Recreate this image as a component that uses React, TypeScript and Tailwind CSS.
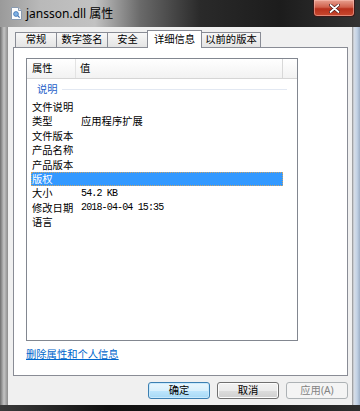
import React from "react";

const cjk = { fontFamily: '"Noto Sans", "Noto Sans CJK SC", sans-serif' };
const mono = { fontFamily: '"Liberation Mono", "Noto Sans CJK SC", monospace' };

function Tab({ label, w, selected, first }: { label: string; w: string; selected?: boolean; first?: boolean }) {
  if (selected) {
    return (
      <div className={`${w} h-[18px] -ml-px relative z-10 flex items-center justify-center border border-b-0 border-[#898c95] bg-white text-[10.3px] text-black`}>
        {label}
      </div>
    );
  }
  return (
    <div
      className={`${w} h-[15px] mb-px ${first ? "" : "-ml-px"} flex items-center justify-center border border-b-0 border-[#898c95] bg-[linear-gradient(to_bottom,#f7f7f7,#e4e4e4)] text-[10.3px] text-black`}
    >
      {label}
    </div>
  );
}

function Row({ label, value, monoValue, selected }: { label: string; value?: string; monoValue?: boolean; selected?: boolean }) {
  return (
    <div
      className={`h-[14.4px] ml-[4px] w-[252px] flex items-center text-[10.3px] leading-none ${
        selected ? "bg-[#3399ff] text-white border border-dotted border-[#c9a46a]" : "text-black border border-transparent"
      }`}
    >
      <div className="w-[49px] pl-0">{label}</div>
      {value && (
        <div style={monoValue ? mono : undefined} className={monoValue ? "text-[10px] tracking-[-0.85px]" : ""}>
          {value}
        </div>
      )}
    </div>
  );
}

function Btn({ label, kind }: { label: string; kind: "default" | "normal" | "disabled" }) {
  const cls =
    kind === "default"
      ? "border-[#3c7fb1] bg-[linear-gradient(to_bottom,#eaf6fd_0%,#d9f0fc_50%,#bee6fd_51%,#a7d9f5_100%)] shadow-[inset_0_0_0_1px_#c9eafd] text-black"
      : kind === "normal"
      ? "border-[#707070] bg-[linear-gradient(to_bottom,#f2f2f2_0%,#ebebeb_50%,#dddddd_51%,#cfcfcf_100%)] shadow-[inset_0_0_0_1px_#fcfcfc] text-black"
      : "border-[#adb2b5] bg-[#f4f4f4] text-[#838383]";
  return (
    <div className={`w-[62px] h-[17px] rounded-[3px] border flex items-center justify-center text-[10.3px] leading-none ${cls}`}>
      {label}
    </div>
  );
}

export default function App() {
  return (
    <div style={cjk} className="w-[360px] h-[411px] flex flex-col overflow-hidden bg-[#1e1e1e]">
      {/* Title bar */}
      <div className="h-[27px] flex items-center bg-[linear-gradient(to_right,#9a9a9a_0px,#b9b9b9_40px,#c2c2c2_95px,#6a6a6a_140px,#2a2a2a_200px,#1c1c1c_280px,#333_360px)]">
        <div className="ml-[10px] w-[12px] h-[14px] flex items-center justify-center">
          <svg width="11" height="13" viewBox="0 0 11 13">
            <path d="M0.5 0.5 H7.5 L10.5 3.5 V12.5 H0.5 Z" fill="#fdfdfd" stroke="#8a9bb0" />
            <path d="M7.5 0.5 V3.5 H10.5" fill="#dfe6ee" stroke="#8a9bb0" />
            <circle cx="5" cy="7" r="2.4" fill="#7fb2e5" stroke="#3a6fb0" strokeWidth="0.8" />
            <path d="M6.7 8.7 L8.6 10.6" stroke="#3a6fb0" strokeWidth="1.2" />
          </svg>
        </div>
        <div className="ml-[4px] text-[12px] leading-none text-black">jansson.dll 属性</div>
        <div className="ml-auto mr-[5px] self-start w-[42px] h-[17px] rounded-b-[4px] border border-t-0 border-[#3a1a1a] bg-[linear-gradient(to_bottom,#e8a090_0%,#d0604c_45%,#b8301c_55%,#c84a30_100%)] flex items-center justify-center shadow-[inset_0_0_0_1px_rgba(255,200,190,0.5)]">
          <svg width="11" height="9" viewBox="0 0 11 9">
            <path d="M1.5 1 L9.5 8 M9.5 1 L1.5 8" stroke="#3a1010" strokeWidth="3" strokeLinecap="round" />
            <path d="M1.5 1 L9.5 8 M9.5 1 L1.5 8" stroke="#ffffff" strokeWidth="1.8" strokeLinecap="round" />
          </svg>
        </div>
      </div>

      <div className="flex-1 flex">
        {/* left frame */}
        <div className="w-[8px] bg-[linear-gradient(to_right,#6e6e6e_0px,#9a9a9a_2px,#c4c4c4_4px,#a8a8a8_6px,#8c8c8c_8px)]" />
        {/* client */}
        <div className="flex-1 bg-[#f0f0f0] pt-[3px] pl-[5px] pr-[4px] flex flex-col">
          <div className="ml-[2px] h-[18px] -mb-px flex items-end relative z-10">
            <Tab label="常规" w="w-[42px]" first />
            <Tab label="数字签名" w="w-[52px]" />
            <Tab label="安全" w="w-[41px]" />
            <Tab label="详细信息" w="w-[55px]" selected />
            <Tab label="以前的版本" w="w-[60px]" />
          </div>
          <div className="h-[329px] border border-[#898c95] bg-white pl-[12px] pt-[10px] flex flex-col">
            <div className="w-[272px] h-[283px] border border-[#828790] bg-white flex flex-col">
              {/* header */}
              <div className="h-[20px] flex border-b border-[#d5d5d5] bg-[linear-gradient(to_bottom,#ffffff,#f2f2f2)] text-[10.3px] text-black">
                <div className="w-[49px] pl-[5px] flex items-center border-r border-[#e3e3e3]">属性</div>
                <div className="w-[207px] pl-[4px] flex items-center border-r border-[#d8d8d8]">值</div>
                <div className="flex-1" />
              </div>
              {/* group */}
              <div className="h-[21px] flex items-center pl-[10px]">
                <span className="text-[10.3px] leading-none text-[#1e5fc8]">说明</span>
                <div className="ml-[4px] w-[225px] h-px bg-[#e2e8f2]" />
              </div>
              <Row label="文件说明" />
              <Row label="类型" value="应用程序扩展" />
              <Row label="文件版本" />
              <Row label="产品名称" />
              <Row label="产品版本" />
              <Row label="版权" selected />
              <Row label="大小" value="54.2 KB" monoValue />
              <Row label="修改日期" value="2018-04-04 15:35" monoValue />
              <Row label="语言" />
            </div>
            <div className="mt-[8px] text-[10.3px] leading-none text-[#0066cc] underline">删除属性和个人信息</div>
          </div>
          <div className="mt-[6px] flex justify-end gap-[7px]">
            <Btn label="确定" kind="default" />
            <Btn label="取消" kind="normal" />
            <Btn label="应用(A)" kind="disabled" />
          </div>
        </div>
        {/* right frame */}
        <div className="w-[8px] bg-[linear-gradient(to_right,#8f8f8f_0px,#d8dee6_2px,#c3d3e6_5px,#9eb0c6_8px)]" />
      </div>
      {/* bottom frame */}
      <div className="h-[6px] bg-[linear-gradient(to_right,#3a3a3a,#111_30%,#1a1a1a_70%,#2e2e2e)]" />
    </div>
  );
}
